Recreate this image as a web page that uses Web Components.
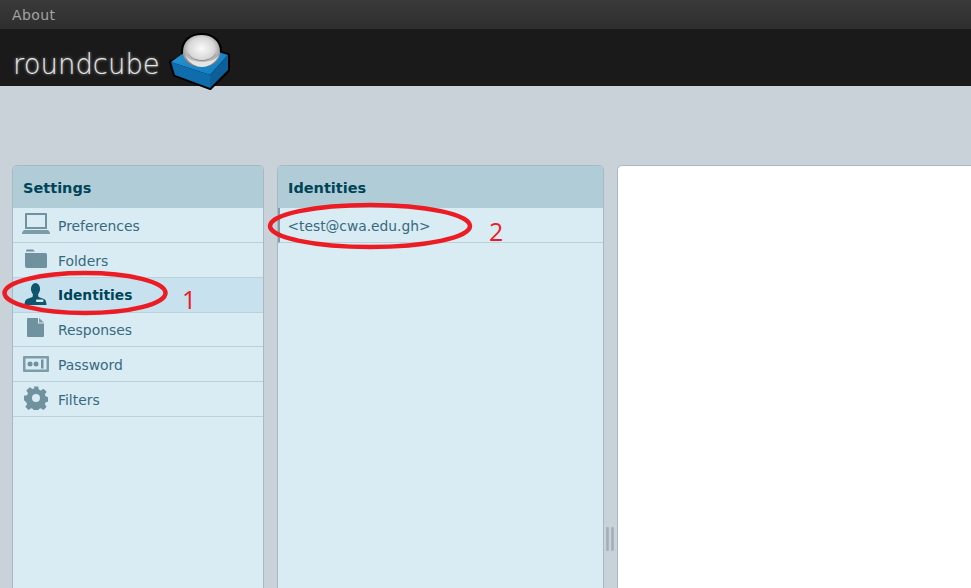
<!DOCTYPE html>
<html lang="en"><head><meta charset="utf-8"><title>Roundcube Settings</title>
<style>
html,body{margin:0;height:100%;overflow:hidden;background:#c9d1d9}
body{font-family:"DejaVu Sans",sans-serif}
</style></head><body>
<rc-app></rc-app>
<script>
const ICONS={
laptop:[3,`<svg width="28" height="21" viewBox="0 0 28 21"><path fill="#6f929e" fill-rule="evenodd" d="M4 0h20a1 1 0 0 1 1 1v15H3V1a1 1 0 0 1 1-1zm1 2v12h18V2z"/><path fill="#7c9ca8" d="M2 17h24l2 2.500V21H0v-1.500z"/></svg>`],
folder:[3,`<svg width="22" height="19" viewBox="0 0 22 19"><path fill="#6f929e" d="M1 2.500C1 1 1.500.5 2.500.5h5.500l2 2zM0 4h20.500A1.500 1.500 0 0 1 22 5.500V17.500a1.500 1.500 0 0 1-1.500 1.500H2a2 2 0 0 1-2-2z"/></svg>`],
person:[1,`<svg width="23" height="22" viewBox="0 0 23 22"><ellipse cx="11.500" cy="6" rx="4.600" ry="6" fill="#0f556e"/><path fill="#0f556e" d="M9 11h5l.5 3 5.500 2c1.500.8 2.500 2.800 2.500 6H.5c0-3.200 1-5.200 2.500-6l5.500-2z"/><rect x="12" y="16.500" width="7.500" height="2.500" rx="1" fill="#d5e9f1"/></svg>`],
doc:[5,`<svg width="17" height="19" viewBox="0 0 17 19"><path fill="#6f929e" d="M1 0h10v5.500h6V18a1 1 0 0 1-1 1H1a1 1 0 0 1-1-1V1a1 1 0 0 1 1-1z"/><path fill="#7c9ca8" d="M12 0l5 4.500h-5z"/></svg>`],
pass:[0,`<svg width="26" height="16" viewBox="0 0 26 16"><path fill="#7c9ca8" fill-rule="evenodd" d="M1 0h24a1 1 0 0 1 1 1v14a1 1 0 0 1-1 1H1a1 1 0 0 1-1-1V1a1 1 0 0 1 1-1zm1.500 2.500v11h21v-11z"/><circle cx="7" cy="8" r="2.500" fill="#6f929e"/><circle cx="13" cy="8" r="2.500" fill="#6f929e"/><rect x="18" y="3.500" width="2.500" height="9" fill="#6f929e"/></svg>`],
gear:[2,`<svg width="24" height="24" viewBox="0 0 26 26"><path fill="#6f929e" fill-rule="evenodd" d="M10.500 0h5l.7 3.500 2.300 1 3-2 3.500 3.500-2 3 1 2.300 3.500.7v5l-3.500.7-1 2.300 2 3-3.500 3.500-3-2-2.300 1-.7 3.500h-5l-.7-3.500-2.300-1-3 2-3.500-3.500 2-3-1-2.300L-.5 15.500v-5l3.500-.7 1-2.300-2-3L6 1l3 2 2.300-1z M13 8.500a4.500 4.500 0 1 0 0 9 4.500 4.500 0 0 0 0-9z" transform="translate(.5 .5) scale(.96)"/></svg>`]
};
class RcTopbar extends HTMLElement{constructor(){super();this.attachShadow({mode:"open"}).innerHTML=`<style>
:host{display:flex;align-items:center;box-sizing:border-box;height:29px;padding:0 0 0 12px;background:linear-gradient(#3a3a3a,#2e2e2e);color:#a3a3a3;font:14px/1 "DejaVu Sans",sans-serif;letter-spacing:.4px}
</style><slot></slot>`}}
class RcLogo extends HTMLElement{constructor(){super();this.attachShadow({mode:"open"}).innerHTML=`<style>
:host{display:flex;align-items:flex-start;box-sizing:border-box;height:57px;background:#1a1a1a;position:relative;overflow:visible}
span{margin:19px 0 0 13px;width:148px;white-space:nowrap;flex:none;font:200 27.500px/32px "DejaVu Sans",sans-serif;color:#e6e6e6;text-shadow:0 0 3px rgba(255,255,255,.6)}
svg{margin:2px 0 0 7px;overflow:visible;flex:none}
</style><span><slot></slot></span>
<svg width="64" height="60" viewBox="0 0 64 60">
<defs>
<radialGradient id="b" cx=".5" cy=".42" r=".62"><stop offset="0" stop-color="#fafafa"/><stop offset=".55" stop-color="#d8d8d8"/><stop offset=".85" stop-color="#9a9a9a"/><stop offset="1" stop-color="#5c5c5c"/></radialGradient>
<linearGradient id="t" x1="0" y1="0" x2="1" y2="1"><stop offset="0" stop-color="#2a96d4"/><stop offset="1" stop-color="#0f7cc0"/></linearGradient>
</defs>
<path d="M3 31L15 27V20C15 10 23 4 33.500 4S52 10 52 20v1l8 3V39L42 57 7 44z" fill="#000" stroke="#000" stroke-width="4" stroke-linejoin="round"/>
<path d="M3 31L27 14 60 24 42 44z" fill="url(#t)"/>
<path d="M42 44L60 24V39L42 57z" fill="#0c5f99"/>
<path d="M3 31L42 44V57L7 44z" fill="#0f6dad"/>
<path d="M15 21C15 10 23 4 33.500 4S52 10 52 21c0 10-8 15-18.500 15S15 31 15 21z" fill="url(#b)"/>
<path d="M17 24c4 9 12 12 17 12s13-3 17-12c-4 5-10 7-17 7s-13-2-17-7z" fill="#e4e4e4"/>
<path d="M20 22c3 5 8 7 14 7s11-2 14-7c0 3-6 8-14 8s-14-5-14-8z" fill="#8a8a8a"/>
</svg>`}}
class RcPanel extends HTMLElement{constructor(){super();this.attachShadow({mode:"open"}).innerHTML=`<style>
:host{display:flex;flex-direction:column;box-sizing:border-box;border:1px solid #a9b9c2;border-bottom:0;border-radius:5px 5px 0 0;background:#d9ebf3;overflow:hidden;min-height:0}
h2{margin:0;box-sizing:border-box;height:42.300px;padding:2px 10px 0;display:flex;align-items:center;background:#b0ccd7;color:#004458;font:bold 14.500px/1 "DejaVu Sans",sans-serif;flex:none}
</style><h2></h2><slot></slot>`;}
connectedCallback(){this.shadowRoot.querySelector("h2").textContent=this.getAttribute("heading")||""}}
class RcRow extends HTMLElement{constructor(){super();this.attachShadow({mode:"open"}).innerHTML=`<style>
:host{display:flex;align-items:center;box-sizing:border-box;height:34.800px;border-bottom:1px solid #bbd2db;color:#376a80;font:13.900px/1 "DejaVu Sans",sans-serif;padding-left:45px;position:relative;flex:none}
:host([selected]){background:#c7e2ee;color:#004458;font-weight:bold;font-size:13.800px}
:host([plain]){padding-left:7.500px;font-size:13.800px;border-left:2px solid #7f9cab}
#i{position:absolute;left:0;top:0;width:45px;height:100%;display:flex;align-items:center;justify-content:center;box-sizing:border-box}
span{padding-top:3px}
:host([selected]) span{padding-top:2px}
</style><div id="i"></div><span><slot></slot></span>`;}
connectedCallback(){const n=this.getAttribute("icon"),i=this.shadowRoot.getElementById("i");if(n){i.innerHTML=ICONS[n][1];i.style.paddingBottom=ICONS[n][0]+"px"}else i.remove()}}
class RcSplitter extends HTMLElement{constructor(){super();this.attachShadow({mode:"open"}).innerHTML=`<style>
:host{position:absolute;right:-11px;top:361px;width:8px;height:24px;display:flex;justify-content:space-between;box-sizing:border-box}
i{width:3px;background:#a3adb5;box-shadow:0 0 0 .5px #b6c0c8 inset}
</style><i></i><i></i>`}}
class RcApp extends HTMLElement{constructor(){super();this.attachShadow({mode:"open"}).innerHTML=`<style>
:host{display:flex;flex-direction:column;height:588px;width:971px;position:relative;overflow:hidden;background:#c9d1d9;font-family:"DejaVu Sans",sans-serif}
main{flex:1;display:flex;gap:13px;padding:79px 0 0 12px;min-height:0}
.a{width:252px}.b{width:327px;position:relative;overflow:visible}.c{flex:1;background:#fff;border-radius:5px 0 0 0;border:1px solid #a9b9c2;border-width:1px 0 0 1px}
.marks{position:absolute;left:0;top:0;pointer-events:none}
.n{position:absolute;color:#ec1c24;font:25px/1 "Open Sans",sans-serif}
</style>
<rc-topbar>About</rc-topbar>
<rc-logo>roundcube</rc-logo>
<main>
<rc-panel class="a" heading="Settings">
<rc-row icon="laptop">Preferences</rc-row>
<rc-row icon="folder">Folders</rc-row>
<rc-row icon="person" selected>Identities</rc-row>
<rc-row icon="doc">Responses</rc-row>
<rc-row icon="pass">Password</rc-row>
<rc-row icon="gear">Filters</rc-row>
</rc-panel>
<rc-panel class="b" heading="Identities">
<rc-row plain>&lt;test@cwa.edu.gh&gt;</rc-row>
<rc-splitter></rc-splitter>
</rc-panel>
<div class="c"></div>
</main>
<svg class="marks" width="971" height="588" fill="none" stroke="#ec1c24" stroke-width="4.500">
<ellipse cx="85" cy="293" rx="80.500" ry="20"/>
<ellipse cx="370" cy="226" rx="100" ry="21"/>
</svg>
<div class="n" style="left:182px;top:287px">1</div>
<div class="n" style="left:489px;top:219px">2</div>`}}
for(const [n,c] of Object.entries({"rc-topbar":RcTopbar,"rc-logo":RcLogo,"rc-panel":RcPanel,"rc-row":RcRow,"rc-splitter":RcSplitter,"rc-app":RcApp}))customElements.define(n,c);
</script></body></html>
